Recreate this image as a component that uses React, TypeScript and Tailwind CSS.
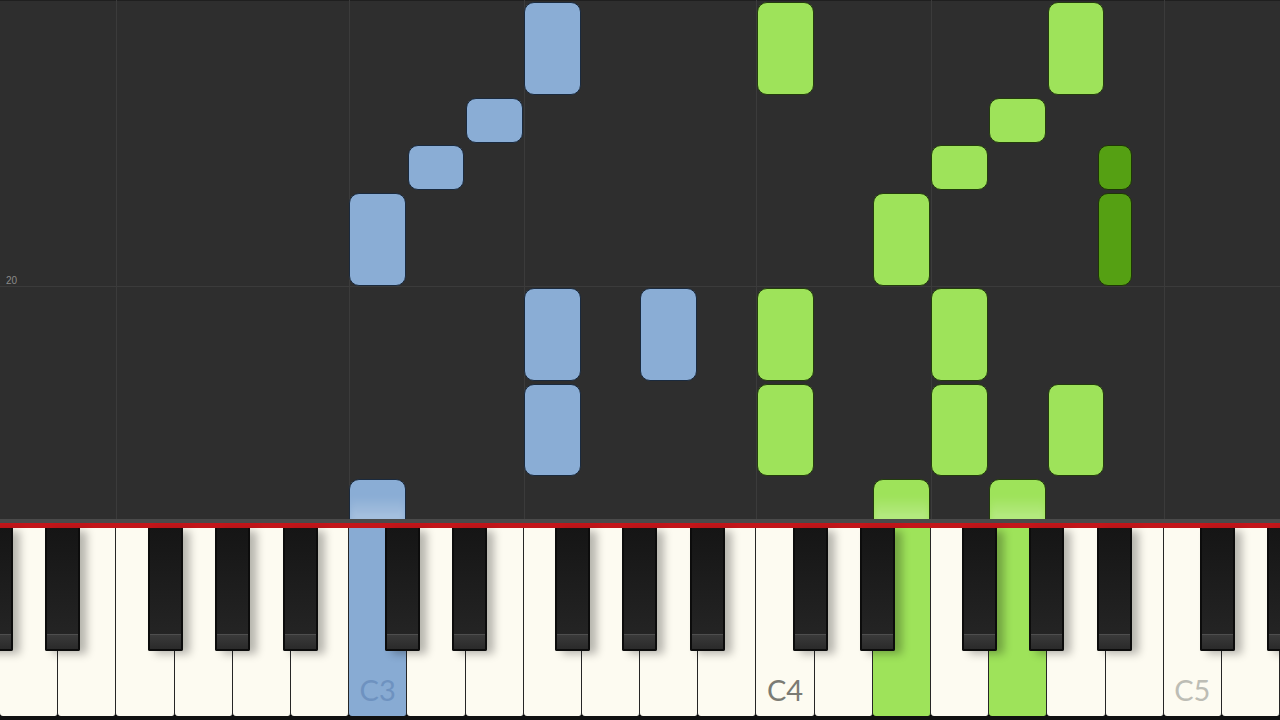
import React from "react";

// ---- Geometry ----
const KEY_W = 1280 / 22; // 22 white keys, D2..D5
const BEAT = 47.7;
const ROW0 = 0.8;
const ROLL_H = 519;

const LETTERS = ["D", "E", "F", "G", "A", "B", "C"];
const POS: Record<string, number> = { C: 0, D: 1, E: 2, F: 3, G: 4, A: 5, B: 6 };
// black key offset from the boundary to the right of its natural
const BLACK_OFF: Record<string, number> = { C: -22, D: -13, F: -27, G: -18, A: -8 };

type Note = { key: string; s: number; e: number | null; tone: "blue" | "green" | "dark" };

const NOTES: Note[] = [
  // left hand (blue)
  { key: "F3", s: 0, e: 2, tone: "blue" },
  { key: "E3", s: 2, e: 3, tone: "blue" },
  { key: "D3", s: 3, e: 4, tone: "blue" },
  { key: "C3", s: 4, e: 6, tone: "blue" },
  { key: "F3", s: 6, e: 8, tone: "blue" },
  { key: "A3", s: 6, e: 8, tone: "blue" },
  { key: "F3", s: 8, e: 10, tone: "blue" },
  { key: "C3", s: 10, e: null, tone: "blue" },
  // right hand (green)
  { key: "C4", s: 0, e: 2, tone: "green" },
  { key: "A4", s: 0, e: 2, tone: "green" },
  { key: "G4", s: 2, e: 3, tone: "green" },
  { key: "F4", s: 3, e: 4, tone: "green" },
  { key: "E4", s: 4, e: 6, tone: "green" },
  { key: "A#4", s: 3, e: 4, tone: "dark" },
  { key: "A#4", s: 4, e: 6, tone: "dark" },
  { key: "C4", s: 6, e: 8, tone: "green" },
  { key: "C4", s: 8, e: 10, tone: "green" },
  { key: "F4", s: 6, e: 8, tone: "green" },
  { key: "F4", s: 8, e: 10, tone: "green" },
  { key: "A4", s: 8, e: 10, tone: "green" },
  { key: "E4", s: 10, e: null, tone: "green" },
  { key: "G4", s: 10, e: null, tone: "green" },
];

function whiteIndex(letter: string, octave: number) {
  return 6 + (octave - 3) * 7 + POS[letter];
}

function noteBox(key: string) {
  const letter = key[0];
  const sharp = key[1] === "#";
  const octave = parseInt(key.slice(sharp ? 2 : 1), 10);
  const idx = whiteIndex(letter, octave);
  if (!sharp) return { left: idx * KEY_W + 0.3, width: KEY_W - 1.3 };
  return { left: (idx + 1) * KEY_W + BLACK_OFF[letter] + 0.5, width: 34 };
}

const toneCls = {
  blue: "bg-[#8aadd5] border-[#1a2a3e]",
  green: "bg-[#9ee35a] border-[#233d0c]",
  dark: "bg-[#55a013] border-[#1e3606]",
};

const LINES_X = [2, 6, 9, 13, 16, 20].map((i) => i * KEY_W);

function Roll() {
  return (
    <div className="relative h-[519px] shrink-0 overflow-hidden bg-[#2e2e2e]">
      <div className="absolute inset-x-0 top-0 h-[1px] bg-[#1f1f1f]" />
      {LINES_X.map((x) => (
        <div key={x} className="absolute top-0 bottom-0 w-px bg-[#3b3b3b]" style={{ left: Math.round(x) }} />
      ))}
      <div className="absolute inset-x-0 top-[286px] h-px bg-[#3b3b3b]" />
      <span className="absolute left-[6px] top-[273px] font-['Liberation_Sans',sans-serif] text-[10px] text-[#8a8a8a]">
        20
      </span>

      {NOTES.map((n, i) => {
        const { left, width } = noteBox(n.key);
        const top = ROW0 + n.s * BEAT + 1.3;
        const bottom = n.e === null ? ROLL_H + 12 : ROW0 + n.e * BEAT - 1.3;
        return (
          <div
            key={i}
            className={`absolute overflow-hidden rounded-[10px] border ${toneCls[n.tone]}`}
            style={{ left, width, top, height: bottom - top }}
          >
            {n.e === null && (
              <div className="absolute inset-x-0 bottom-[8px] h-[26px] bg-gradient-to-t from-white/30 to-transparent blur-[3px]" />
            )}
          </div>
        );
      })}
    </div>
  );
}

const LIT: Record<string, string> = { C3: "bg-[#88abd3]", E4: "bg-[#9ee35a]", G4: "bg-[#9ee35a]" };
const LABEL: Record<string, string> = { C3: "text-[#6e92c0]", C4: "text-[#7b7b74]", C5: "text-[#bdbdb5]" };

function Keyboard() {
  const whites = Array.from({ length: 22 }, (_, i) => {
    const letter = LETTERS[i % 7];
    const octave = 2 + Math.floor((i + 1) / 7);
    return { letter, name: `${letter}${octave}` };
  });

  const blacks: number[] = [-22];
  whites.forEach((w, i) => {
    if (w.letter in BLACK_OFF && i < 21) blacks.push((i + 1) * KEY_W + BLACK_OFF[w.letter]);
  });
  blacks.push(22 * KEY_W + BLACK_OFF["D"]);

  return (
    <div className="flex shrink-0 flex-col">
      <div className="h-[4px] bg-[#4a4a4a]" />
      <div className="h-[5px] bg-[#c3161a]" />
      <div className="relative flex h-[188px]">
        {whites.map((w) => (
          <div
            key={w.name}
            className={`relative flex flex-1 items-end justify-center rounded-b-[3px] border-r border-[#262626] pb-[12px] ${
              LIT[w.name] ?? "bg-[#fdfbf1]"
            }`}
          >
            {LABEL[w.name] && (
              <span className={`font-['Lato',sans-serif] text-[29px] font-normal leading-none ${LABEL[w.name]}`}>
                {w.name}
              </span>
            )}
          </div>
        ))}
        {blacks.map((x) => (
          <div
            key={x}
            className="absolute top-0 flex h-[123px] w-[35px] flex-col rounded-b-[2px] border-x-2 border-b-2 border-[#0c0c0c] bg-gradient-to-b from-[#151515] to-[#262626] shadow-[7px_3px_9px_rgba(0,0,0,0.28)]"
            style={{ left: x }}
          >
            <div className="flex-1" />
            <div className="h-[15px] border-t border-[#4e4e4e] bg-gradient-to-b from-[#3a3a3a] to-[#2a2a2a]" />
          </div>
        ))}
      </div>
      <div className="h-[4px] bg-[#111]" />
    </div>
  );
}

export default function App() {
  return (
    <div className="flex h-[720px] w-[1280px] flex-col overflow-hidden bg-black">
      <Roll />
      <Keyboard />
    </div>
  );
}
